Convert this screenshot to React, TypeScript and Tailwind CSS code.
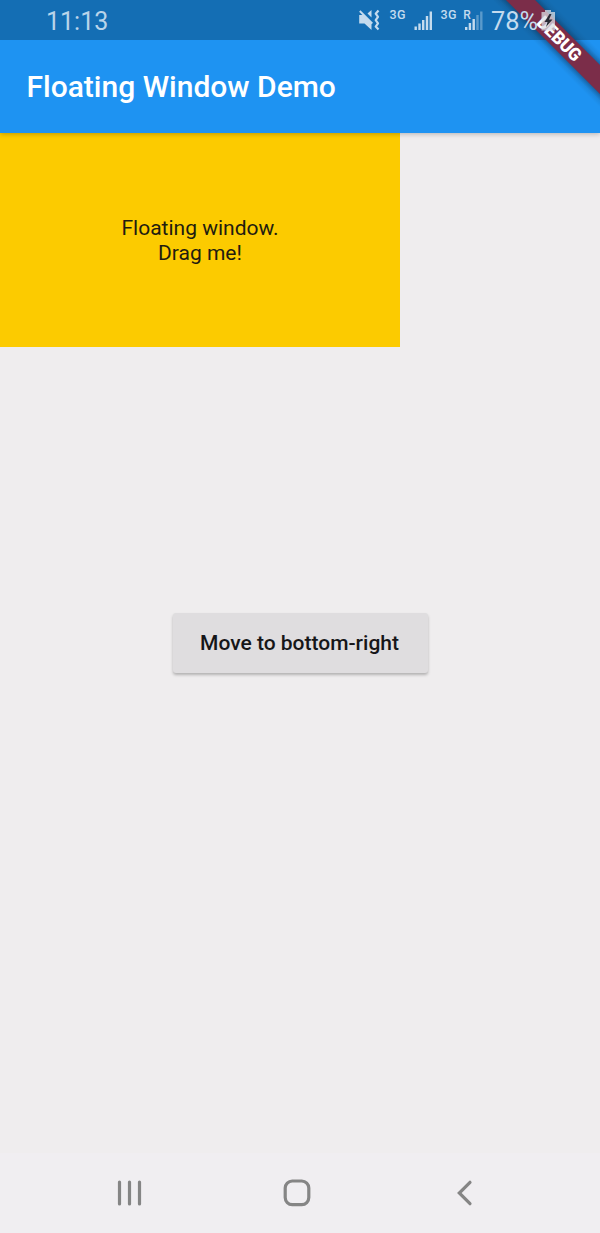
import React from "react";

function StatusIcons() {
  return (
    <svg
      className="absolute left-[350px] top-0 z-30"
      width="250"
      height="40"
      viewBox="350 0 250 40"
      fill="#c4dbee"
      fontFamily="Roboto, sans-serif"
    >
      {/* muted speaker with vibration waves */}
      <path d="M359.200 15h4.300l8 8v7l-7-6.500h-5.300z" />
      <path d="M371.500 10v7.500l-4-4z" />
      <path d="M359.800 11l12.500 12.500" stroke="#c4dbee" strokeWidth="1.900" />
      <path
        d="M378.500 10.500l-2.800 3.200 2.300 3.200-2.300 3.300 2.300 3.200-2.300 3.200 2.800 2.900"
        fill="none"
        stroke="#c4dbee"
        strokeWidth="2.200"
        strokeLinejoin="round"
      />
      <text x="389.500" y="19.300" fontSize="12.500" fontWeight="500" textLength="16">3G</text>
      <path d="M414.500 26.500h2.400v3.500h-2.400zM418.300 23.500h2.400v6.500h-2.400zM422 20h2.400v10h-2.400zM425.800 16h2.400v14h-2.400zM429.600 11.500h2.400v18.500h-2.400z" />
      <text x="440.500" y="19.300" fontSize="12.500" fontWeight="500" textLength="16">3G</text>
      <text x="463.300" y="18.500" fontSize="12" fontWeight="500">R</text>
      <path d="M465 27h2.400v3h-2.400zM468.700 23h2.400v7h-2.400zM472.500 19h2.400v11h-2.400z" />
      <path opacity=".4" d="M476.300 15h2.400v15h-2.400zM480.100 11.500h2.400v18.500h-2.400z" />
      <text x="491" y="29.500" fontSize="25" fontWeight="400" textLength="47" lengthAdjust="spacingAndGlyphs">78%</text>
      {/* charging battery */}
      <path fill="#dce0e5" fillOpacity=".75" d="M545 12v-2h6v2h4v18.500h-13.500v-18.500z" />
      <path fill="#292b35" d="M549.500 14l-5 8h3l-1.500 5 6.500-7.500h-3.500l2.500-5.500z" />
    </svg>
  );
}

function DebugBanner() {
  return (
    <svg width="120" height="120" viewBox="480 0 120 120">
      <defs>
        <linearGradient id="bannerShade" x1="0" y1="0" x2="0" y2="1">
          <stop offset="0" stopColor="#10304f" stopOpacity="0" />
          <stop offset=".12" stopColor="#10304f" stopOpacity=".12" />
          <stop offset=".25" stopColor="#10304f" stopOpacity=".5" />
          <stop offset=".75" stopColor="#10304f" stopOpacity=".5" />
          <stop offset=".88" stopColor="#10304f" stopOpacity=".12" />
          <stop offset="1" stopColor="#10304f" stopOpacity="0" />
        </linearGradient>
      </defs>
      <g transform="translate(560 39.500) rotate(45)">
        <rect x="-90" y="-20" width="180" height="40" fill="url(#bannerShade)" />
        <rect x="-90" y="-10.300" width="180" height="20.600" fill="#7b2d49" />
        <text
          x="-1"
          y="6.200"
          fill="#fff"
          fontFamily="Roboto, sans-serif"
          fontSize="18"
          fontWeight="900"
          textAnchor="middle"
          textLength="55"
          lengthAdjust="spacingAndGlyphs"
        >
          DEBUG
        </text>
      </g>
    </svg>
  );
}

function NavIcons() {
  return (
    <svg width="600" height="80" viewBox="0 1153 600 80" fill="none" stroke="#858585" strokeWidth="3.200">
      <path strokeLinecap="round" d="M119.500 1182v22M129.500 1182v22M139.500 1182v22" />
      <rect x="285.200" y="1181" width="23.600" height="23.600" rx="7" />
      <path strokeLinecap="round" d="M470 1182.300l-10.700 10.700 10.700 10.700" />
    </svg>
  );
}

export default function App() {
  return (
    <div className="relative flex h-[1233px] w-[600px] flex-col overflow-hidden bg-[#efedee] font-['Roboto',sans-serif]">
      <div className="relative z-20 h-10 shrink-0 bg-[#146eb4] pl-[46px] text-[25px] leading-[43px] font-normal text-[#b9d4ea]">
        <span>11:13</span>
      </div>
      <header className="z-10 flex h-[93px] shrink-0 items-center bg-[#1e93f2] pl-[26.500px] shadow-[0_1px_5px_rgba(0,0,0,0.25)]">
        <h1 className="text-[30px] font-medium text-white">Floating Window Demo</h1>
      </header>
      <main className="flex grow flex-col">
        <section className="flex h-[213.500px] w-[400px] items-center justify-center bg-[#fccb00] pt-[2px] text-center text-[21px] leading-[25px] text-[#221c10]">
          <p>
            Floating window.
            <br />
            Drag me!
          </p>
        </section>
        <button className="mt-[266.500px] h-[60px] w-[255px] self-center rounded-[3px] bg-[#dfdddf] pt-[2px] pr-[1px] text-[21px] font-medium text-[#161618] shadow-[0_2px_3px_rgba(0,0,0,0.25)]">
          Move to bottom-right
        </button>
      </main>
      <nav className="h-20 shrink-0 bg-[#f0eef1]">
        <NavIcons />
      </nav>
      <div className="absolute right-0 top-0 z-20">
        <DebugBanner />
      </div>
      <StatusIcons />
    </div>
  );
}
